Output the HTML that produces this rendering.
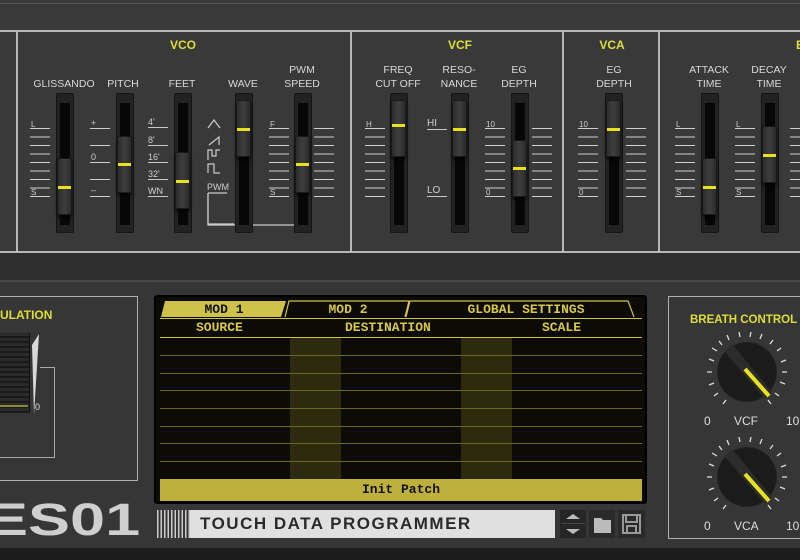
<!DOCTYPE html>
<html><head><meta charset="utf-8"><style>
*{margin:0;padding:0;box-sizing:border-box}
body{width:800px;height:560px;overflow:hidden;background:#1c1c1c;font-family:"Liberation Sans",Arial,sans-serif;position:relative}
.a{position:absolute}
.lbl{position:absolute;color:#d8d8d8;font-size:10.5px;text-align:center;line-height:14px;transform:translateX(-50%);white-space:nowrap}
.ttl{position:absolute;color:#dedd3a;font-weight:bold;font-size:12px;transform:translateX(-50%)}
.hl{position:absolute;background:#b8b8b8}
.sc{position:absolute;width:20px;height:70px;background:repeating-linear-gradient(to bottom,#cfcfcf 0 1.2px,transparent 1.2px 8.5px)}
.sl{position:absolute;width:18px;height:140px;top:93px;background:#222;border-radius:2px;box-shadow:inset 0 0 0 1px #161616}
.sl:before{content:"";position:absolute;left:4px;top:10px;width:10px;height:122px;background:#070707}
.cap{position:absolute;left:1px;width:15px;height:57px;background:linear-gradient(90deg,#2c2c2c,#3e3e3e 50%,#2a2a2a);border:1px solid #1a1a1a;border-radius:2px;box-shadow:0 3px 3px rgba(0,0,0,.6)}
.cap i{position:absolute;left:0;right:0;height:3px;background:#e8e21c}
.sm{position:absolute;color:#d0d0d0;font-size:9px;border-bottom:1px solid #c8c8c8;width:20px;line-height:10px}
.row{position:absolute;left:160px;width:482px;height:1px;background:#6a6520}
</style></head><body>
<div class="a" style="left:0;top:0;width:800px;height:253px;background:#393939"></div>
<div class="a" style="left:0;top:3px;width:800px;height:1px;background:#555"></div>
<div class="hl" style="left:0;top:30px;width:800px;height:2px"></div>
<div class="hl" style="left:0;top:251px;width:800px;height:2px"></div>
<div class="hl" style="left:16px;top:30px;width:2px;height:222px"></div>
<div class="hl" style="left:350px;top:30px;width:2px;height:222px"></div>
<div class="hl" style="left:562px;top:30px;width:2px;height:222px"></div>
<div class="hl" style="left:658px;top:30px;width:2px;height:222px"></div>
<div class="a" style="left:0;top:253px;width:800px;height:27px;background:#2f2f2f"></div>

<div class="ttl" style="left:183px;top:38px">VCO</div>
<div class="ttl" style="left:460px;top:38px">VCF</div>
<div class="ttl" style="left:612px;top:38px">VCA</div>
<div class="ttl" style="left:800px;top:38px">E</div>

<div class="lbl" style="left:64px;top:77px">GLISSANDO</div>
<div class="lbl" style="left:123px;top:77px">PITCH</div>
<div class="lbl" style="left:182px;top:77px">FEET</div>
<div class="lbl" style="left:243px;top:77px">WAVE</div>
<div class="lbl" style="left:302px;top:63px">PWM<br>SPEED</div>
<div class="lbl" style="left:398px;top:63px">FREQ<br>CUT OFF</div>
<div class="lbl" style="left:459px;top:63px">RESO-<br>NANCE</div>
<div class="lbl" style="left:519px;top:63px">EG<br>DEPTH</div>
<div class="lbl" style="left:614px;top:63px">EG<br>DEPTH</div>
<div class="lbl" style="left:709px;top:63px">ATTACK<br>TIME</div>
<div class="lbl" style="left:769px;top:63px">DECAY<br>TIME</div>

<div class="sc" style="left:30px;top:128px"></div>
<div class="sc" style="left:90px;top:128px;background:repeating-linear-gradient(to bottom,#cfcfcf 0 1.2px,transparent 1.2px 17px)"></div>
<div class="sc" style="left:269px;top:128px"></div><div class="sc" style="left:314px;top:128px"></div>
<div class="sc" style="left:365px;top:128px"></div>
<div class="sc" style="left:485px;top:128px"></div><div class="sc" style="left:532px;top:128px"></div>
<div class="sc" style="left:578px;top:128px"></div><div class="sc" style="left:626px;top:128px"></div>
<div class="sc" style="left:675px;top:128px"></div><div class="sc" style="left:735px;top:128px"></div><div class="sc" style="left:790px;top:128px"></div>
<div class="a" style="color:#ccc;font-size:8px;left:31px;top:120px">L</div><div class="a" style="color:#ccc;font-size:8px;left:31px;top:188px">S</div>
<div class="a" style="color:#ccc;font-size:9px;left:91px;top:118px">+</div><div class="a" style="color:#ccc;font-size:9px;left:91px;top:152px">0</div><div class="a" style="color:#ccc;font-size:9px;left:91px;top:185px">–</div>
<div class="a" style="color:#ccc;font-size:8px;left:270px;top:120px">F</div><div class="a" style="color:#ccc;font-size:8px;left:270px;top:188px">S</div>
<div class="a" style="color:#ccc;font-size:8px;left:366px;top:120px">H</div>
<div class="a" style="color:#ccc;font-size:8px;left:486px;top:120px">10</div><div class="a" style="color:#ccc;font-size:8px;left:486px;top:188px">0</div>
<div class="a" style="color:#ccc;font-size:8px;left:579px;top:120px">10</div><div class="a" style="color:#ccc;font-size:8px;left:579px;top:188px">0</div>
<div class="a" style="color:#ccc;font-size:8px;left:676px;top:120px">L</div><div class="a" style="color:#ccc;font-size:8px;left:676px;top:188px">S</div>
<div class="a" style="color:#ccc;font-size:8px;left:736px;top:120px">L</div><div class="a" style="color:#ccc;font-size:8px;left:736px;top:188px">S</div>
<div class="sm" style="left:148px;top:117px">4'</div><div class="sm" style="left:148px;top:135px">8'</div><div class="sm" style="left:148px;top:152px">16'</div><div class="sm" style="left:148px;top:169px">32'</div><div class="sm" style="left:148px;top:186px">WN</div>
<div class="sm" style="left:427px;top:119px;font-size:10px">HI</div><div class="sm" style="left:427px;top:186px;font-size:10px">LO</div>
<svg class="a" style="left:206px;top:116px" width="28" height="110"><g fill="none" stroke="#ccc" stroke-width="1.2"><path d="M2 12 L8 4 L14 12"/><path d="M3 29 L13 21 L13 29"/><path d="M2 44 V34 H6 V40 H10 V34 H14"/><path d="M2 57 V48 H8 V57 H14"/><path d="M2 77 H21 M2 77 V108 H99"/></g><text x="1" y="74" fill="#ccc" font-size="9" font-family="Liberation Sans">PWM</text></svg>
<svg class="a" style="left:206px;top:190px" width="100" height="40"><path d="M2 3 V35 H96 V30" fill="none" stroke="#ccc" stroke-width="1.2"/></svg>

<div class="sl" style="left:56px"><div class="cap" style="top:65px"><i style="top:27px"></i></div></div>
<div class="sl" style="left:116px"><div class="cap" style="top:43px"><i style="top:26px"></i></div></div>
<div class="sl" style="left:174px"><div class="cap" style="top:59px"><i style="top:27px"></i></div></div>
<div class="sl" style="left:235px"><div class="cap" style="top:7px"><i style="top:27px"></i></div></div>
<div class="sl" style="left:294px"><div class="cap" style="top:43px"><i style="top:26px"></i></div></div>
<div class="sl" style="left:390px"><div class="cap" style="top:7px"><i style="top:23px"></i></div></div>
<div class="sl" style="left:451px"><div class="cap" style="top:7px"><i style="top:27px"></i></div></div>
<div class="sl" style="left:511px"><div class="cap" style="top:47px"><i style="top:26px"></i></div></div>
<div class="sl" style="left:605px"><div class="cap" style="top:7px"><i style="top:27px"></i></div></div>
<div class="sl" style="left:701px"><div class="cap" style="top:65px"><i style="top:27px"></i></div></div>
<div class="sl" style="left:761px"><div class="cap" style="top:33px"><i style="top:27px"></i></div></div>

<div class="a" style="left:0;top:280px;width:800px;height:268px;background:#363636;border-top:2px solid #484848"></div>
<div class="a" style="left:-2px;top:296px;width:140px;height:185px;border:1.5px solid #b0b0b0"></div>
<div class="a" style="color:#dedd3a;font-weight:bold;font-size:12px;left:0;top:308px">ULATION</div>
<div class="a" style="left:0;top:333px;width:30px;height:80px;background:repeating-linear-gradient(to bottom,#2a2a2a 0 3px,#1a1a1a 3px 5px);border-right:1px solid #111"></div>
<div class="a" style="left:0;top:405px;width:28px;height:2px;background:#8a8a30"></div>
<svg class="a" style="left:30px;top:330px" width="30" height="90"><path d="M2 15 L9 4 L4 85 Z" fill="#d8d8d8"/></svg>
<div class="a" style="left:0;top:367px;width:55px;height:91px;border-right:1px solid #aaa;border-bottom:1px solid #aaa;border-top:1px solid #aaa;border-top-color:transparent"></div>
<div class="a" style="left:40px;top:367px;width:15px;height:1px;background:#aaa"></div>
<div class="a" style="color:#ddd;font-size:9px;left:35px;top:402px">0</div>

<div class="a" style="left:154px;top:295px;width:493px;height:209px;background:#0c0b06;border:2px solid #000;border-radius:3px"></div>
<svg class="a" style="left:156px;top:297px" width="490" height="22">
<path d="M5 20 L9 4 H130 L125 20 Z" fill="#cfc24a"/>
<path d="M129 20 L133 4 H253 L249 20 M254 4 L250 20 M254 4 H472 L478 20" fill="none" stroke="#cfc24a" stroke-width="1.2"/>
<text x="68" y="16" fill="#111" font-size="13" font-weight="bold" text-anchor="middle" font-family="Liberation Mono">MOD 1</text>
<text x="192" y="16" fill="#d8c84a" font-size="13" font-weight="bold" text-anchor="middle" font-family="Liberation Mono">MOD 2</text>
<text x="370" y="16" fill="#d8c84a" font-size="13" font-weight="bold" text-anchor="middle" font-family="Liberation Mono">GLOBAL SETTINGS</text>
</svg>
<div class="a" style="left:160px;top:318px;width:482px;height:1px;background:#cfc24a"></div>
<div class="a" style="font-family:'Liberation Mono';font-weight:bold;font-size:13px;color:#d8c84a;left:196px;top:320px">SOURCE</div>
<div class="a" style="font-family:'Liberation Mono';font-weight:bold;font-size:13px;color:#d8c84a;left:345px;top:320px">DESTINATION</div>
<div class="a" style="font-family:'Liberation Mono';font-weight:bold;font-size:13px;color:#d8c84a;left:542px;top:320px">SCALE</div>
<div class="a" style="left:160px;top:337px;width:482px;height:1px;background:#cfc24a"></div>
<div class="a" style="left:290px;top:338px;width:51px;height:141px;background:#2e2a0e"></div>
<div class="a" style="left:461px;top:338px;width:51px;height:141px;background:#2e2a0e"></div>
<div class="row" style="top:355px"></div><div class="row" style="top:373px"></div><div class="row" style="top:390px"></div><div class="row" style="top:408px"></div><div class="row" style="top:426px"></div><div class="row" style="top:443px"></div><div class="row" style="top:461px"></div>
<div class="a" style="left:160px;top:479px;width:482px;height:22px;background:#bdb03c"></div>
<div class="a" style="left:160px;top:482px;width:482px;text-align:center;font-weight:bold;font-size:13px;color:#111;font-family:'Liberation Mono'">Init Patch</div>

<div class="a" style="left:0;top:497px;color:#cfcfcf;font-size:45px;font-weight:bold;letter-spacing:0px;line-height:45px;transform:scaleX(1.4);transform-origin:left;margin-left:-14px">ES01</div>
<div class="a" style="left:157px;top:510px;width:33px;height:28px;background:repeating-linear-gradient(90deg,#ccc 0 1.5px,transparent 1.5px 3.5px)"></div>
<div class="a" style="left:190px;top:510px;width:365px;height:28px;background:#e0e0e0;color:#2a2a2a;font-size:17px;font-weight:bold;line-height:28px;padding-left:10px;letter-spacing:1.5px">TOUCH DATA PROGRAMMER</div>
<div class="a" style="left:560px;top:510px;width:26px;height:28px;background:#262626"></div>
<svg class="a" style="left:560px;top:510px" width="86" height="30"><path d="M6 9 L13 4 L20 9Z M6 19 L13 24 L20 19Z" fill="#bbb"/><rect x="1" y="13" width="24" height="1" fill="#444"/><rect x="29" y="0" width="26" height="28" fill="#2a2a2a"/><path d="M34 8 H41 L43 10 H51 V23 H34Z" fill="#bbb"/><rect x="58" y="0" width="27" height="28" fill="#2a2a2a"/><path d="M63 5 H80 V23 H63Z M66 5 V12 H77 V5 M67 16 H76 V23 H67Z" fill="none" stroke="#999" stroke-width="2"/></svg>

<div class="a" style="left:668px;top:296px;width:140px;height:243px;border:1.5px solid #b0b0b0"></div>
<div class="a" style="color:#dedd3a;font-weight:bold;font-size:11.5px;left:690px;top:314px;white-space:nowrap">BREATH CONTROL</div>
<svg class="a" style="left:700px;top:325px" width="100" height="210">
<defs><g id="k"><g stroke="#ddd" stroke-width="1.3"><path d="M-40 0 H-35 M-38 -13 L-33 -11 M-35 -24 L-30 -21 M-28 -31 L-25 -27 M-20 -37 L-18 -32 M-8 -40 L-7 -35 M4 -40 L3 -35 M15 -38 L13 -33 M26 -32 L23 -28 M34 -24 L30 -21 M39 -12 L34 -10 M40 0 H35 M38 12 L33 10 M32 24 L28 21 M24 32 L21 28 M-38 13 L-33 11 M-33 24 L-29 21 M-24 32 L-21 28"/></g><circle r="30" fill="#222"/><circle r="29" fill="#1b1b1b"/><path d="M-22 -20 L-15 -28 L25 20 L18 27Z" fill="#2c2c2c"/><path d="M-2 -3 L22 24" stroke="#e8e21c" stroke-width="4"/></g></defs>
<use href="#k" x="47" y="47"/><use href="#k" x="47" y="152"/>
<text x="4" y="100" fill="#ddd" font-size="12" font-family="Liberation Sans">0</text><text x="34" y="100" fill="#ddd" font-size="12" font-family="Liberation Sans">VCF</text><text x="86" y="100" fill="#ddd" font-size="12" font-family="Liberation Sans">10</text>
<text x="4" y="205" fill="#ddd" font-size="12" font-family="Liberation Sans">0</text><text x="34" y="205" fill="#ddd" font-size="12" font-family="Liberation Sans">VCA</text><text x="86" y="205" fill="#ddd" font-size="12" font-family="Liberation Sans">10</text>
</svg>
</body></html>
